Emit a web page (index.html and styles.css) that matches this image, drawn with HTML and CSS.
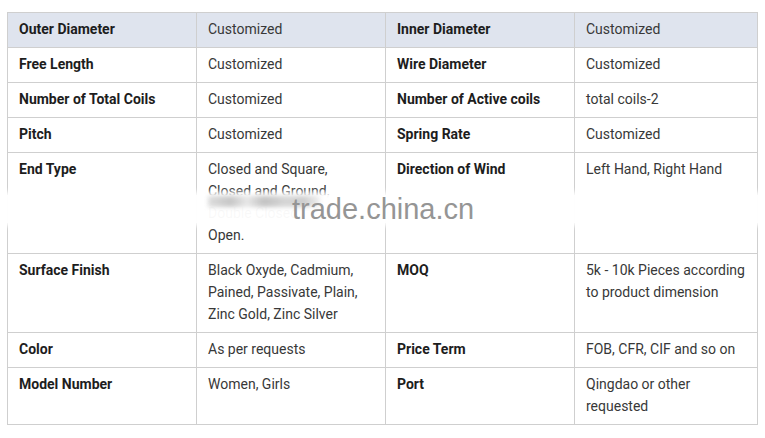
FILE: index.html
```html
<!DOCTYPE html>
<html>
<head>
<meta charset="utf-8">
<link rel="stylesheet" href="styles.css">
</head>
<body>
<div class="wrap">
<table class="spec">
<colgroup><col class="c1"><col class="c2"><col class="c3"><col class="c4"></colgroup>
<tr class="head"><th>Outer Diameter</th><td>Customized</td><th>Inner Diameter</th><td>Customized</td></tr>
<tr><th>Free Length</th><td>Customized</td><th>Wire Diameter</th><td>Customized</td></tr>
<tr><th>Number of Total Coils</th><td>Customized</td><th>Number of Active coils</th><td>total coils-2</td></tr>
<tr><th>Pitch</th><td>Customized</td><th>Spring Rate</th><td>Customized</td></tr>
<tr><th>End Type</th><td>Closed and Square,<br>Closed and Ground,<br>Double Closed,<br>Open.</td><th>Direction of Wind</th><td>Left Hand, Right Hand</td></tr>
<tr><th>Surface Finish</th><td>Black Oxyde, Cadmium,<br>Pained, Passivate, Plain,<br>Zinc Gold, Zinc Silver</td><th>MOQ</th><td>5k - 10k Pieces according to product dimension</td></tr>
<tr><th>Color</th><td>As per requests</td><th>Price Term</th><td>FOB, CFR, CIF and so on</td></tr>
<tr><th>Model Number</th><td>Women, Girls</td><th>Port</th><td>Qingdao or other requested</td></tr>
</table>
<div class="band"></div>
<div class="logo"></div>
<div class="mark">trade.china.cn</div>
</div>
</body>
</html>
```
FILE: styles.css
```css
html, body { margin: 0; padding: 0; background: #fff; }
body { font-family: Roboto, "Noto Sans", sans-serif; }
.wrap { position: relative; padding: 12px 0 0 7px; }
.spec { border-collapse: collapse; table-layout: fixed; width: 750px; font-size: 14px; line-height: 22px; }
.c1, .c2, .c3 { width: 189px; }
.c4 { width: 183px; }
.spec th, .spec td { border: 1px solid #cfcfcf; padding: 5px 11px 7px 11px; text-align: left; vertical-align: top; }
.spec th { font-weight: 700; color: #1d1d1d; }
.spec td { font-weight: 400; color: #383838; }
.head th, .head td { background: #dfe4ee; }
.band { position: absolute; left: 0; top: 195px; width: 765px; height: 28px; background: rgba(255,255,255,0.97); box-shadow: 0 0 5px 3px rgba(255,255,255,0.95); }
.logo { position: absolute; left: 208px; top: 196px; width: 112px; height: 11px; background: linear-gradient(90deg, #d8d8d8 0%, #bdbdbd 20%, #e4e4e4 35%, #b8b8b8 50%, #d0d0d0 70%, #c4c4c4 85%, #eeeeee 100%); filter: blur(2px); opacity: 0.85; }
.mark { position: absolute; left: 292px; top: 195px; font-family: "Liberation Sans", Arial, sans-serif; font-size: 29px; line-height: 29px; color: #959595; }
```
